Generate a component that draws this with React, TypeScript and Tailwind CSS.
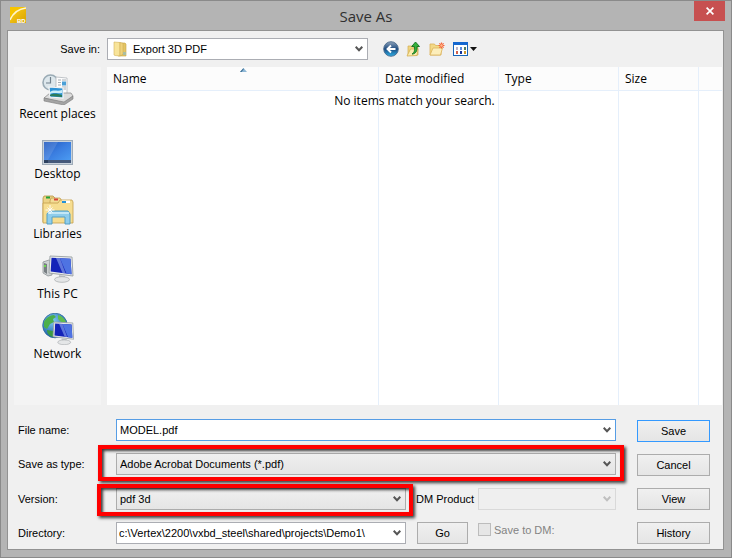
import { useState } from "react";
import type { ReactNode } from "react";

const PLACES = [
  { label: "Recent places", icon: <RecentIcon /> },
  { label: "Desktop", icon: <DesktopIcon /> },
  { label: "Libraries", icon: <LibrariesIcon /> },
  { label: "This PC", icon: <ComputerIcon /> },
  { label: "Network", icon: <NetworkIcon /> },
];

const COLUMNS = [
  { label: "Name", width: "" },
  { label: "Date modified", width: "w-[120px]" },
  { label: "Type", width: "w-[120px]" },
  { label: "Size", width: "w-[80px]" },
  { label: "", width: "w-[23px]" },
];

export default function App() {
  const [fileName, setFileName] = useState("MODEL.pdf");
  const [directory, setDirectory] = useState(
    "c:\\Vertex\\2200\\vxbd_steel\\shared\\projects\\Demo1\\",
  );

  return (
    <div className="flex min-h-screen flex-col border border-[#8a8a8a] bg-[#b4b4b4] font-['Liberation_Sans',Arial,sans-serif] text-[11px] leading-4 text-black">
      <header className="flex h-[29px] items-start pr-[6px] pl-[9px]">
        <div className="flex w-7 pt-[6px]">
          <AppLogo />
        </div>
        <h1 className="flex-1 pt-[4px] text-center font-['Open_Sans','Noto_Sans',sans-serif] text-[15px] leading-[22px] text-[#303030]">
          Save As
        </h1>
        <button
          type="button"
          aria-label="Close"
          className="flex h-5 w-[31px] items-center justify-center bg-[#c75050]"
        >
          <svg width="8" height="8" viewBox="0 0 8 8" stroke="#fff" strokeWidth="1.7">
            <path d="M.6.6l6.8 6.8M7.4.6L.6 7.4" />
          </svg>
        </button>
      </header>

      <main className="mr-[7px] mb-[7px] ml-[6px] flex flex-1 flex-col border border-[#929292] bg-[#f0f0f0]">
        <div className="flex items-center pt-[7px] pb-[7px]">
          <label htmlFor="save-in" className="w-[99px] pr-[7px] text-right">
            Save in:
          </label>
          <div className="relative w-[261px]">
            <select
              id="save-in"
              className="block h-[22px] w-full appearance-none border border-[#abadb3] bg-white pr-5 pl-[25px]"
            >
              <option>Export 3D PDF</option>
            </select>
            <span className="pointer-events-none absolute inset-y-0 left-[6px] flex items-center">
              <FolderIcon />
            </span>
            <Chevron />
          </div>
          <div className="ml-[15px] flex items-center gap-[7px]">
            <ToolButton label="Back">
              <BackIcon />
            </ToolButton>
            <ToolButton label="Up one level">
              <UpIcon />
            </ToolButton>
            <ToolButton label="Create new folder">
              <NewFolderIcon />
            </ToolButton>
            <ToolButton label="View menu">
              <ViewIcon />
            </ToolButton>
          </div>
        </div>

        <div className="flex flex-1 gap-[6px] pr-[1px] pl-[6px] font-['Open_Sans','Noto_Sans',sans-serif]">
          <nav className="w-[87px] bg-[#f4f4f4] pt-[6px]">
            {PLACES.map((place) => (
              <button
                key={place.label}
                type="button"
                className="flex h-[60px] w-full flex-col items-center text-[12px] leading-[18px] whitespace-nowrap"
              >
                {place.icon}
                {place.label}
              </button>
            ))}
          </nav>

          <div className="relative flex min-h-[338px] flex-1 bg-white">
            <table className="w-full table-fixed border-separate border-spacing-0 text-[12px]">
              <thead>
                <tr>
                  {COLUMNS.map((col) => (
                    <th
                      key={col.label}
                      className={`h-6 border-r border-b border-[#e5effb] bg-[#fcfcfc] px-[6px] text-left font-normal last:border-r-0 ${col.width}`}
                    >
                      {col.label}
                    </th>
                  ))}
                </tr>
              </thead>
              <tbody>
                <tr>
                  {COLUMNS.map((col) => (
                    <td key={col.label} className="border-r border-[#e5effb] last:border-r-0" />
                  ))}
                </tr>
              </tbody>
            </table>
            <svg className="absolute top-[1px] left-[133px]" width="7" height="4" viewBox="0 0 7 4">
              <path d="M0 4L3.500 0L7 4z" fill="#8fb8d6" />
              <path d="M0 4L3.500 0V1.500L1.500 4z" fill="#3a6d94" />
            </svg>
            <p className="absolute inset-x-0 top-[25px] text-center text-[12px] leading-[18px]">
              No items match your search.
            </p>
          </div>
        </div>

        <form
          className="flex gap-[21px] pt-[14px] pr-[13px] pb-[5px] pl-[10px]"
          onSubmit={(e) => e.preventDefault()}
        >
          <div className="grid flex-1 grid-cols-[98px_minmax(0,1fr)_72px_138px] items-center gap-y-3">
            <label htmlFor="file-name">File name:</label>
            <div className="relative col-span-3">
              <input
                id="file-name"
                value={fileName}
                onChange={(e) => setFileName(e.target.value)}
                className="block h-[22px] w-full border border-[#569de5] bg-white pr-5 pl-[3px] outline-none"
              />
              <Chevron />
            </div>

            <label htmlFor="file-type">Save as type:</label>
            <div className="relative col-span-3">
              <select
                id="file-type"
                className="block h-[22px] w-full appearance-none border border-[#acacac] bg-linear-to-b from-[#efefef] to-[#e5e5e5] pr-5 pl-[3px]"
              >
                <option>Adobe Acrobat Documents (*.pdf)</option>
              </select>
              <Chevron />
              <span className="pointer-events-none absolute -top-2 -right-2 -bottom-[6px] -left-[18px] border-4 border-[#f00] shadow-[2px_2px_3px_rgba(0,0,0,0.75),inset_2px_2px_3px_rgba(0,0,0,0.75)]" />
            </div>

            <label htmlFor="version">Version:</label>
            <div className="relative">
              <select
                id="version"
                className="block h-[22px] w-full appearance-none border border-[#acacac] bg-linear-to-b from-[#efefef] to-[#e5e5e5] pr-5 pl-[3px]"
              >
                <option>pdf 3d</option>
              </select>
              <Chevron />
              <span className="pointer-events-none absolute -top-1 -right-[7px] -bottom-[6px] -left-[19px] border-4 border-[#f00] shadow-[2px_2px_3px_rgba(0,0,0,0.75),inset_2px_2px_3px_rgba(0,0,0,0.75)]" />
            </div>
            <label htmlFor="dm-product" className="pl-[10px] whitespace-nowrap">
              DM Product
            </label>
            <div className="relative">
              <select
                id="dm-product"
                disabled
                className="block h-[22px] w-full appearance-none border border-[#d9d9d9] bg-[#efefef]"
              />
              <Chevron muted />
            </div>

            <label htmlFor="directory">Directory:</label>
            <div className="relative">
              <input
                id="directory"
                value={directory}
                onChange={(e) => setDirectory(e.target.value)}
                className="block h-[22px] w-full border border-[#abadb3] bg-white pr-5 pl-[2px] outline-none"
              />
              <Chevron />
            </div>
            <div className="pr-[10px] pl-[11px]">
              <PushButton>Go</PushButton>
            </div>
            <label className="flex items-center gap-[3px] pb-[6px] text-[#838383]">
              <input
                type="checkbox"
                disabled
                className="size-[13px] appearance-none border border-[#bcbcbc] bg-[#e6e6e6]"
              />
              Save to DM:
            </label>
          </div>

          <div className="flex w-[73px] flex-col gap-3 pt-[1px]">
            <PushButton primary>Save</PushButton>
            <PushButton>Cancel</PushButton>
            <PushButton>View</PushButton>
            <PushButton>History</PushButton>
          </div>
        </form>
      </main>
    </div>
  );
}

function PushButton({ children, primary }: { children: ReactNode; primary?: boolean }) {
  return (
    <button
      type="button"
      className={`h-[22px] w-full border bg-linear-to-b from-[#f0f0f0] to-[#e5e5e5] ${
        primary ? "border-[#3399ff]" : "border-[#acacac]"
      }`}
    >
      {children}
    </button>
  );
}

function ToolButton({ label, children }: { label: string; children: ReactNode }) {
  return (
    <button type="button" aria-label={label} className="flex h-4 items-center">
      {children}
    </button>
  );
}

function Chevron({ muted }: { muted?: boolean }) {
  return (
    <span className="pointer-events-none absolute inset-y-0 right-[5px] flex items-center">
      <svg width="8" height="6" viewBox="0 0 8 6" fill="none">
        <path d="M.7.8L4 4.300L7.300.8" stroke={muted ? "#bfbfbf" : "#555"} strokeWidth="2" />
      </svg>
    </span>
  );
}

function AppLogo() {
  return (
    <svg width="16" height="16" viewBox="0 0 16 16">
      <defs>
        <linearGradient id="logo" x1="0" y1="0" x2="1" y2="1">
          <stop offset="0" stopColor="#ffd21c" />
          <stop offset="1" stopColor="#d9a300" />
        </linearGradient>
      </defs>
      <rect width="16" height="16" fill="url(#logo)" />
      <path d="M0 0H16V1C8 2 3 6 0 12z" fill="#f6c400" />
      <path d="M0 13C3 6 8 2 16 1" stroke="#fff6cf" strokeWidth="1.400" fill="none" />
      <text x="7" y="15.500" fontSize="6" fontWeight="700" fill="#fff" fontFamily="Liberation Sans">
        BD
      </text>
    </svg>
  );
}

function FolderIcon() {
  return (
    <svg width="15" height="16" viewBox="0 0 15 16">
      <path d="M5 2h7l1 1v12H5z" fill="#e3c566" stroke="#c9a648" strokeWidth=".6" />
      <path d="M1 1l6 .5V15l-5-.5L1 14z" fill="#f8e49a" stroke="#d3b45a" strokeWidth=".6" />
      <path d="M7 1.500l3 .8v11L7 15z" fill="#efd27b" stroke="#caa64c" strokeWidth=".5" />
      <path d="M10 11h3v3h-3z" fill="#a9bda0" />
    </svg>
  );
}

function BackIcon() {
  return (
    <svg width="16" height="16" viewBox="0 0 16 16">
      <defs>
        <linearGradient id="back" x1="0" y1="0" x2="0" y2="1">
          <stop offset="0" stopColor="#8fa3ba" />
          <stop offset=".5" stopColor="#1c4a80" />
          <stop offset="1" stopColor="#2db1e8" />
        </linearGradient>
      </defs>
      <circle cx="8" cy="8" r="7.300" fill="url(#back)" stroke="#4a6a8c" strokeWidth=".9" />
      <path d="M8 4.500L4.500 8L8 11.500M5 8h7.500" fill="none" stroke="#fff" strokeWidth="1.900" />
    </svg>
  );
}

function UpIcon() {
  return (
    <svg width="16" height="16" viewBox="0 0 16 16">
      <path d="M2 5h4l1 1.500h5V14H2z" fill="#f0d680" stroke="#d3ae52" strokeWidth=".7" />
      <path d="M1 15L4.500 8H12l-1 6.500z" fill="#fcecae" stroke="#d3ae52" strokeWidth=".8" />
      <path
        d="M6 13c2.200-1 2.800-3 2.500-7.500H5.700L9.500 1l4 4.500H11c.3 4.500-1.200 7.500-5 7.500z"
        fill="#35b13b"
        stroke="#12701f"
        strokeWidth=".9"
      />
    </svg>
  );
}

function NewFolderIcon() {
  return (
    <svg width="17" height="16" viewBox="0 0 17 16">
      <path d="M1 3h4.500l1 1.500H12V14H1z" fill="#f3d985" stroke="#dab158" strokeWidth=".8" />
      <path d="M1 14L4 7h9.500l-2 7z" fill="#fceebb" stroke="#dcb35a" strokeWidth=".8" />
      <path d="M12.500 1.500v6M9.500 4.500h6M10.400 2.400l4.200 4.200M14.600 2.400l-4.200 4.200" stroke="#f4653b" strokeWidth="1.200" />
      <circle cx="12.500" cy="4.500" r="1.200" fill="#ffb98a" />
    </svg>
  );
}

function ViewIcon() {
  return (
    <svg width="24" height="16" viewBox="0 0 24 16">
      <rect x=".5" y="1.500" width="14" height="13" fill="#fff" stroke="#1764b8" />
      <path d="M0 1h15v3H0z" fill="#1467cf" />
      <path d="M3 6h2v3H3z" fill="#b9b4c8" />
      <path d="M7 6h2v3H7z" fill="#5a8be0" />
      <path d="M11 6h2v3h-2z" fill="#4e7a62" />
      <path d="M3 10h2v3H3z" fill="#d1604c" />
      <path d="M7 10h2v3H7z" fill="#14339a" />
      <path d="M11 10h2v3h-2z" fill="#c8962c" />
      <path d="M17 6h7l-3.500 4z" fill="#111" />
    </svg>
  );
}

function RecentIcon() {
  return (
    <svg width="32" height="32" viewBox="0 0 32 32">
      <circle cx="8.500" cy="9.500" r="7.500" fill="#dde7ec" stroke="#9aabb5" strokeWidth="1.600" />
      <path d="M8.500 4v6H4" fill="none" stroke="#71808b" strokeWidth="1.200" />
      <path d="M14 4l11 1v16l-11-1z" fill="#fdfdfd" stroke="#b3b8bc" strokeWidth=".8" />
      <path d="M16 7h3M16 9.500h3M16 12h3M20 14h4M20 7h4M21 16h3" stroke="#9ba4ac" strokeWidth=".9" />
      <path d="M20 8.500h4v4h-4z" fill="#4a9fd6" />
      <path d="M2 25l6-5h21l2 3-9 7z" fill="#dcdcdc" stroke="#8f8f8f" strokeWidth=".8" />
      <path d="M2 25l20 4 9-6v3l-9 6L2 28z" fill="#a4a4a4" stroke="#7c7c7c" strokeWidth=".6" />
      <path d="M7 14l14 1v10L8 24z" fill="#2d93d6" stroke="#f5f5f5" strokeWidth="1.200" />
      <path d="M8 19c4-3 7 0 12-2v3c-5 1-8-1-12 1z" fill="#c9ecf8" />
      <path d="M8 22c4-2 7-1 12 0v2L8 23z" fill="#2d7c5a" />
    </svg>
  );
}

function DesktopIcon() {
  return (
    <svg width="32" height="32" viewBox="0 0 32 32">
      <defs>
        <linearGradient id="desk" x1="0" y1="0" x2="1" y2="1">
          <stop offset="0" stopColor="#1f58be" />
          <stop offset=".5" stopColor="#3a7de0" />
          <stop offset="1" stopColor="#4b9bf2" />
        </linearGradient>
      </defs>
      <rect x=".5" y="7.500" width="30" height="24" fill="#c8d2dc" stroke="#9eabb8" />
      <rect x="2" y="9" width="27" height="18" fill="url(#desk)" />
      <path d="M2 9h14L6 27H2z" fill="#fff" opacity=".12" />
      <rect x="2" y="27" width="27" height="3" fill="#45597a" />
      <rect x="2" y="27" width="4" height="3" fill="#2c405f" />
    </svg>
  );
}

function LibrariesIcon() {
  return (
    <svg width="32" height="32" viewBox="0 0 32 32">
      <path d="M1 5l1-2h9l2 2v24H1z" fill="#ecd286" stroke="#b89645" strokeWidth=".8" />
      <path d="M8 8l1-3h9l2 3v20H8z" fill="#f3dd95" stroke="#c19f50" strokeWidth=".8" />
      <path d="M1 10h15l2-3h12l1 2v21H1z" fill="#f6dd90" stroke="#c4a04c" strokeWidth=".8" />
      <path d="M4 3.500h4v2H4z" fill="#21a337" />
      <path d="M12 5.500h4v2h-4z" fill="#d7433a" />
      <path d="M20 7.500h8v2.500h-8z" fill="#fff" />
      <path d="M20 8h4v2h-4z" fill="#2492d8" />
      <path d="M5 31V21l2-3h19l2 3v10h-5v-7H10v7z" fill="#8fcdeb" stroke="#539fc4" />
      <path d="M6 20h21" stroke="#d4effa" strokeWidth="1.500" />
      <path d="M8 12v9M3.500 17h9M5.500 14.500l5 5M10.500 14.500l-5 5" stroke="#fff" strokeWidth=".9" />
    </svg>
  );
}

function Monitor() {
  return (
    <g>
      <path d="M17 22l6 1v5h-6z" fill="#bfc4c6" />
      <ellipse cx="20" cy="26.500" rx="7.500" ry="2.800" fill="#e4e6e7" stroke="#a5a9ab" strokeWidth=".7" />
      <path d="M8 3l22 1 1 19-24-3z" fill="#e7eaeb" stroke="#999fa2" strokeWidth=".9" />
      <path d="M9.500 4.700l19 1 1 15.500L8.700 18.500z" fill="#1423b8" />
      <path d="M18 5.200l10.500.5 1 15.500-5-.7z" fill="#4e73e2" />
      <path d="M14 5l4 .2 5.500 15.100-3-.4z" fill="#91aef2" opacity=".6" />
    </g>
  );
}

function ComputerIcon() {
  return (
    <svg width="32" height="32" viewBox="0 0 32 32">
      <path d="M1 9l6-2 3 2v13l-4 1-5-3z" fill="#ced2d4" stroke="#8d9396" strokeWidth=".8" />
      <path d="M2 10l3 1v10l-3-2z" fill="#777e82" />
      <path d="M2 12h2v2H2z" fill="#6fdc4d" />
      <Monitor />
    </svg>
  );
}

function NetworkIcon() {
  return (
    <svg width="32" height="32" viewBox="0 0 32 32">
      <defs>
        <radialGradient id="globe" cx=".4" cy=".3" r=".7">
          <stop offset="0" stopColor="#83cdf3" />
          <stop offset="1" stopColor="#155ba5" />
        </radialGradient>
      </defs>
      <circle cx="13" cy="12.500" r="12.300" fill="url(#globe)" stroke="#2c679c" strokeWidth=".8" />
      <path d="M2 9c2-4 6-7 10-7l2 2-3 2 1 3-4 2-3 5-3-2z" fill="#4caf4b" />
      <path d="M16 2c4 1 7 4 8 7h-5l-3-3z" fill="#60bd4d" />
      <path d="M5 17l6 1 2 4-3 2c-3-2-5-3-5-7z" fill="#3b9b45" />
      <g transform="translate(5 6.500) scale(.86)">
        <Monitor />
      </g>
    </svg>
  );
}
